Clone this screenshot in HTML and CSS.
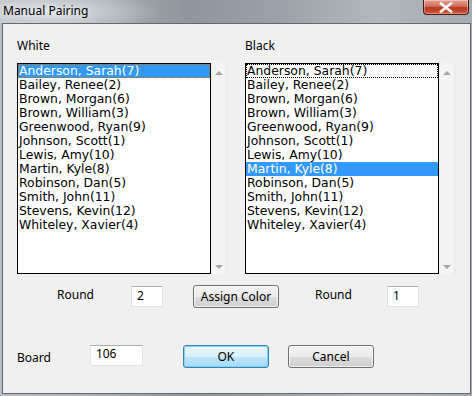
FILE: index.html
```html
<!DOCTYPE html>
<html>
  <head>
    <meta charset="UTF-8" />
    <title>Manual Pairing</title>
    <link rel="stylesheet" href="styles.css">
  </head>
  <body>
    <div class="window">
      <div class="titlebar">
        <span class="title">Manual Pairing</span>
        <div class="close">
          <svg width="14" height="11" viewBox="0 0 14 11">
            <path d="M2 1.5 L12 9.5 M12 1.5 L2 9.5" stroke="#fff" stroke-width="2.6" stroke-linecap="square"/>
          </svg>
        </div>
      </div>
      <div class="content">
        <div class="lists">
          <div class="column">
            <label class="caption">White</label>
            <div class="listwrap">
              <ul class="listbox">
                <li class="selected focused">Anderson, Sarah(7)</li>
                <li>Bailey, Renee(2)</li>
                <li>Brown, Morgan(6)</li>
                <li>Brown, William(3)</li>
                <li>Greenwood, Ryan(9)</li>
                <li>Johnson, Scott(1)</li>
                <li>Lewis, Amy(10)</li>
                <li>Martin, Kyle(8)</li>
                <li>Robinson, Dan(5)</li>
                <li>Smith, John(11)</li>
                <li>Stevens, Kevin(12)</li>
                <li>Whiteley, Xavier(4)</li>
              </ul>
              <div class="scrollbar">
                <span class="arrow up"></span>
                <span class="arrow down"></span>
              </div>
            </div>
          </div>
          <div class="column">
            <label class="caption">Black</label>
            <div class="listwrap">
              <ul class="listbox">
                <li class="focused">Anderson, Sarah(7)</li>
                <li>Bailey, Renee(2)</li>
                <li>Brown, Morgan(6)</li>
                <li>Brown, William(3)</li>
                <li>Greenwood, Ryan(9)</li>
                <li>Johnson, Scott(1)</li>
                <li>Lewis, Amy(10)</li>
                <li class="selected">Martin, Kyle(8)</li>
                <li>Robinson, Dan(5)</li>
                <li>Smith, John(11)</li>
                <li>Stevens, Kevin(12)</li>
                <li>Whiteley, Xavier(4)</li>
              </ul>
              <div class="scrollbar">
                <span class="arrow up"></span>
                <span class="arrow down"></span>
              </div>
            </div>
          </div>
        </div>

        <div class="row round-row">
          <span class="lbl lbl-round1">Round</span>
          <input class="field field-round1" type="text" value="2">
          <button class="btn btn-assign" type="button">Assign Color</button>
          <span class="lbl lbl-round2">Round</span>
          <input class="field field-round2" type="text" value="1">
        </div>

        <div class="row board-row">
          <span class="lbl lbl-board">Board</span>
          <input class="field field-board" type="text" value="106">
          <button class="btn btn-default btn-ok" type="button">OK</button>
          <button class="btn btn-cancel" type="button">Cancel</button>
        </div>
      </div>
    </div>
  </body>
</html>
```

FILE: styles.css
```css
body {
    margin: 0;
    padding: 0;
    font-family: "Noto Sans", "Open Sans", sans-serif;
    font-size: 12px;
    color: #000;
    background-color: #9aa2aa;
}

.window {
    width: 472px;
    height: 396px;
    box-sizing: border-box;
    display: flex;
    flex-direction: column;
    background: linear-gradient(90deg, #b9bec3 0%, #a9afb5 20%, #8e959c 40%, #9ba2a9 60%, #b3b8bd 80%, #a3aab0 100%);
}

.titlebar {
    height: 23px;
    flex: none;
    display: flex;
    align-items: flex-start;
    justify-content: space-between;
    background: radial-gradient(ellipse 110px 22px at 50px 12px, rgba(225, 229, 232, 0.9), rgba(225, 229, 232, 0) 100%);
}

.title {
    margin: 2px 0 0 3px;
    line-height: 18px;
    font-size: 12px;
    text-shadow: 0 0 6px #fff;
}

.close {
    width: 44px;
    height: 14px;
    margin-right: 3px;
    border: 1px solid #4b1c17;
    border-top: none;
    border-radius: 0 0 4px 4px;
    background: linear-gradient(#e5a08f 0%, #d0705a 45%, #b8381f 55%, #cc5a3b 100%);
    box-shadow: inset 0 0 0 1px rgba(255, 255, 255, 0.35);
    display: flex;
    align-items: center;
    justify-content: center;
}

.content {
    flex: 1;
    margin: 0 1px 2px 2px;
    border: 1px solid #656a70;
    background-color: #f0f0f0;
    padding: 14px 0 0 14px;
}

.lists {
    display: flex;
    gap: 18px;
}

.column {
    display: flex;
    flex-direction: column;
}

.caption {
    display: block;
    line-height: 15px;
    height: 15px;
    margin-bottom: 10px;
}

.listwrap {
    display: flex;
}

.listbox {
    list-style: none;
    margin: 0;
    padding: 0;
    width: 192px;
    height: 209px;
    border: 1px solid #000;
    background-color: #fff;
    font-family: "DejaVu Sans", Verdana, sans-serif;
    font-size: 12.4px;
}

.listbox li {
    height: 14px;
    line-height: 14px;
    padding-left: 1px;
    box-sizing: border-box;
    white-space: nowrap;
}

.listbox li.selected {
    background-color: #3399ff;
    color: #fff;
}

.listbox li.focused {
    outline: 1px dotted #000;
    outline-offset: -1px;
}

.listbox li.selected.focused {
    outline-color: #c06a10;
}

.scrollbar {
    width: 15px;
    height: 211px;
    margin-left: 1px;
    background-color: #f4f4f4;
    border-right: 1px solid #e6e6e6;
    display: flex;
    flex-direction: column;
    justify-content: space-between;
    align-items: center;
    padding: 8px 0 5px;
    box-sizing: border-box;
}

.arrow {
    width: 0;
    height: 0;
    border-left: 4px solid transparent;
    border-right: 4px solid transparent;
}

.arrow.up {
    border-bottom: 4px solid #a6a6a6;
}

.arrow.down {
    border-top: 4px solid #a6a6a6;
}

.row {
    display: flex;
    align-items: center;
    height: 23px;
}

.round-row {
    margin-top: 11px;
}

.board-row {
    margin-top: 37px;
}

.lbl {
    line-height: 15px;
}

.lbl-round1 {
    margin-left: 40px;
    margin-top: -4px;
}

.lbl-round2 {
    margin-left: 36px;
    margin-top: -4px;
}

.lbl-board {
    margin-top: 2px;
}

.field {
    height: 21px;
    box-sizing: border-box;
    border: 1px solid #e2e3ea;
    border-top-color: #abadb3;
    background-color: #fff;
    padding: 0 0 2px 5px;
    font-family: "Noto Sans", "Open Sans", sans-serif;
    font-size: 12px;
    outline: none;
}

.field-round1 {
    width: 32px;
    margin-left: 37px;
}

.field-round2 {
    width: 32px;
    margin-left: 35px;
}

.field-board {
    width: 53px;
    margin-left: 39px;
    margin-top: -2px;
    padding-bottom: 4px;
}

.btn {
    width: 86px;
    height: 23px;
    padding: 0;
    border: 1px solid #707070;
    border-radius: 3px;
    background: linear-gradient(#f2f2f2 0%, #ebebeb 50%, #dddddd 51%, #cfcfcf 100%);
    box-shadow: inset 0 0 0 1px rgba(255, 255, 255, 0.7);
    font-family: "Noto Sans", "Open Sans", sans-serif;
    font-size: 12px;
    color: #000;
}

.btn-assign {
    margin-left: 30px;
}

.btn-default {
    border-color: #3c7fb1;
    background: linear-gradient(#eaf6fd 0%, #d9f0fc 50%, #bee6fd 51%, #a7d9f5 100%);
    box-shadow: inset 0 0 0 1px #7fd3f5;
}

.btn-ok {
    margin-left: 40px;
}

.btn-cancel {
    margin-left: 19px;
}
```
